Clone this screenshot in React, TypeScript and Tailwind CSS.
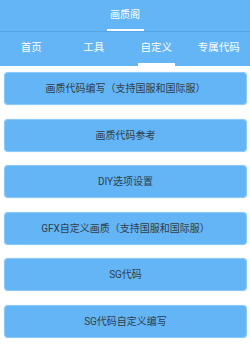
import React from "react";

const tabs = ["首页", "工具", "自定义", "专属代码"];
const items = [
  "画质代码编写（支持国服和国际服）",
  "画质代码参考",
  "DIY选项设置",
  "GFX自定义画质（支持国服和国际服）",
  "SG代码",
  "SG代码自定义编写",
];

export default function App() {
  return (
    <div
      className="w-[250px] h-[353px] bg-white overflow-hidden"
      style={{ fontFamily: '"Roboto", "Noto Sans CJK SC", sans-serif' }}
    >
      <div className="h-[31px] bg-[#64b5f6] flex flex-col items-center">
        <div className="h-[29px] flex items-center text-[10px] text-white">画质阁</div>
        <div className="w-[37px] h-[2px] bg-white" />
      </div>
      <div className="h-[1px] bg-[#56a6e6]" />
      <div className="h-[34px] bg-[#64b5f6] grid grid-cols-4">
        {tabs.map((t, i) => (
          <div key={t} className="flex flex-col items-center">
            <div className="h-[31px] flex items-center text-[10.5px] text-white">{t}</div>
            {i === 2 && <div className="w-[37px] h-[3px] bg-white" />}
          </div>
        ))}
      </div>
      <div className="flex flex-col gap-[13.6px] pt-[6px] pl-[4px] pr-[3px]">
        {items.map((t) => (
          <div
            key={t}
            className="h-[33px] rounded-[4px] bg-[#64b5f6] border border-[#8ecaf9] shadow-[0_0_1px_rgba(100,181,246,0.6)] flex items-center justify-center text-[10px] text-[#2f3e4a]"
          >
            {t}
          </div>
        ))}
      </div>
    </div>
  );
}
